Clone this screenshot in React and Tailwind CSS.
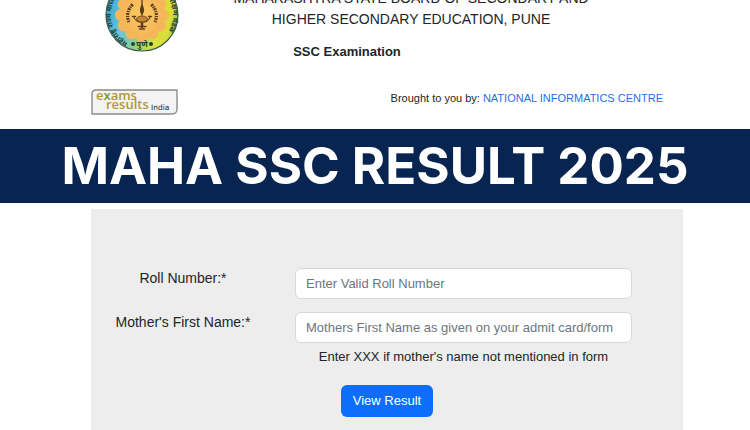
const emblemText = "महाराष्ट्र राज्य माध्यमिक व उच्च माध्यमिक शिक्षण मंडळ";

const petals = Array.from({ length: 12 }, (_, i) => (i * 360) / 12);

function BoardEmblem() {
  return (
    <svg viewBox="0 0 74 74" className="ml-3.5 size-[74px] shrink-0" role="img" aria-label="State board emblem">
      <defs>
        <linearGradient id="ring" x1="0" y1="0.4" x2="1" y2="0.6">
          <stop offset="0" stopColor="#35a6d4" />
          <stop offset="0.25" stopColor="#6cc6d6" />
          <stop offset="0.5" stopColor="#8ed08a" />
          <stop offset="0.75" stopColor="#dbe23a" />
          <stop offset="0.9" stopColor="#d8dc3a" />
          <stop offset="1" stopColor="#7fbf45" />
        </linearGradient>
        <radialGradient id="flower">
          <stop offset="0" stopColor="#fccb60" />
          <stop offset="1" stopColor="#f6b458" />
        </radialGradient>
        <path id="ring-text" d="M 23 64.5 A 31 31 0 1 1 51 64.5" />
      </defs>
      <circle cx="37" cy="37" r="36" fill="url(#ring)" stroke="#3a5a48" strokeWidth="1.2" />
      {petals.map((angle) => (
        <circle key={angle} cx="37" cy="16" r="6" fill="#f7b65a" transform={`rotate(${angle} 37 37)`} />
      ))}
      <circle cx="37" cy="37" r="22" fill="url(#flower)" />
      <g fill="none" stroke="#5a3d1c" strokeLinecap="round">
        <path d="M37 19v18M33 48.5h8M34.5 51h5" strokeWidth="1.3" />
        <path d="M29 39c1 7 15 7 16 0" strokeWidth="1.2" />
        <path d="M27.5 38.5h3M43.5 38.5h3" strokeWidth="1.4" />
        <path d="M37 45v4" strokeWidth="2.4" />
        <path d="M24 44c-3-7-1-13 4-18M50 44c3-7 1-13-4-18" strokeWidth="3.2" strokeLinecap="butt" strokeDasharray="1.3 0.9 2 0.8" />
      </g>
      <path d="M37 26c2.6 4 3 8 0 11-3-3-2.6-7 0-11z" fill="#5a3d1c" />
      <ellipse cx="37" cy="41" rx="5.5" ry="3" fill="#c9832f" stroke="#5a3d1c" strokeWidth="0.8" />
      <text fontSize="7" fontWeight="700" fill="#27402f" fontFamily="'Noto Sans', 'Noto Sans Devanagari', sans-serif">
        <textPath href="#ring-text">{emblemText}</textPath>
      </text>
      <text x="37" y="69" textAnchor="middle" fontSize="8" fontWeight="700" fill="#27402f" fontFamily="'Noto Sans', 'Noto Sans Devanagari', sans-serif">
        पुणे
      </text>
      <circle cx="28" cy="66" r="2" fill="#27402f" />
      <circle cx="46" cy="66" r="2" fill="#27402f" />
    </svg>
  );
}

function ExamsResultsLogo() {
  return (
    <svg viewBox="0 0 87 26" className="h-[26px] w-[87px] shrink-0" role="img" aria-label="Exams results India">
      <path d="M5 1H86v19q0 5-5 5H1V5q0-4 4-4z" fill="#f3f3f3" stroke="#8b8b8b" strokeWidth="1.4" strokeLinejoin="round" />
      <g fontFamily="'Open Sans', sans-serif" fontSize="13" fontWeight="600" fill="#b3963c">
        <text x="5" y="11">e<tspan fill="#6f9a35">x</tspan>ams</text>
        <text x="15" y="20">results</text>
      </g>
      <text x="60" y="20.5" fontFamily="'DejaVu Sans', sans-serif" fontSize="7.5" fill="#222">India</text>
    </svg>
  );
}

function Field({ id, label, placeholder, hint }) {
  return (
    <div className="grid grid-cols-[184px_1fr] gap-x-5">
      <label htmlFor={id} className="text-center text-[14px] leading-5">{label}</label>
      <div>
        <input
          id={id}
          type="text"
          placeholder={placeholder}
          className="block h-[31px] w-full rounded-md border border-[#d5d8dc] bg-white px-2.5 outline-none placeholder:text-[#6c757d] focus:border-[#86b7fe]"
        />
        {hint && <p className="mt-1 text-center leading-5">{hint}</p>}
      </div>
    </div>
  );
}

export default function App() {
  return (
    <div className="h-screen overflow-hidden bg-white font-['Liberation_Sans',Arial,sans-serif] text-[13px] text-[#212529]">
      <header className="-mt-[22px] pr-[67px] pl-[91px]">
        <div className="flex">
          <BoardEmblem />
          <div className="flex-1 pt-[10px] text-center">
            <h1 className="pr-10 text-[14px] leading-[21px]">
              MAHARASHTRA STATE BOARD OF SECONDARY AND
              <br />
              HIGHER SECONDARY EDUCATION, PUNE
            </h1>
            <h2 className="mt-3 pr-[168px] text-[13px] leading-5 font-bold">SSC Examination</h2>
          </div>
        </div>
        <div className="mt-[27px] flex items-start justify-between pr-5 pb-3.5">
          <ExamsResultsLogo />
          <p className="text-[11px] leading-[18px]">
            Brought to you by: <a href="#nic" className="text-[#1f6fe5]">NATIONAL INFORMATICS CENTRE</a>
          </p>
        </div>
      </header>

      <div className="bg-[#082451] py-2 text-center font-['Inter',sans-serif] text-[51px] leading-[58px] font-bold whitespace-nowrap text-white">
        MAHA SSC RESULT 2025
      </div>

      <main className="pt-1.5 pr-[67px] pl-[91px]">
        <form className="bg-[#ededed] pt-[59px] pb-20" onSubmit={(event) => event.preventDefault()}>
          <div className="space-y-[13px] pr-[51px]">
            <Field id="roll-number" label="Roll Number:*" placeholder="Enter Valid Roll Number" />
            <Field
              id="mother-name"
              label="Mother's First Name:*"
              placeholder="Mothers First Name as given on your admit card/form"
              hint="Enter XXX if mother's name not mentioned in form"
            />
          </div>
          <button type="submit" className="mx-auto mt-[18px] block h-8 rounded-md bg-[#0d6efd] px-3 text-white">
            View Result
          </button>
        </form>
      </main>
    </div>
  );
}
